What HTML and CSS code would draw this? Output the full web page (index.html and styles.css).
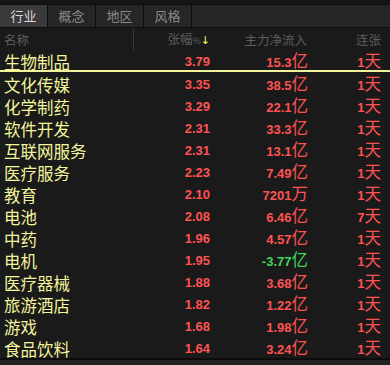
FILE: index.html
```html
<!DOCTYPE html>
<html>
<head>
<meta charset="utf-8">
<link rel="stylesheet" href="styles.css">
</head>
<body>
<div class="top"></div>
<div class="tabs">
  <div class="tab active">行业</div>
  <div class="tab">概念</div>
  <div class="tab">地区</div>
  <div class="tab">风格</div>
  <div class="tab-rest"></div>
</div>
<div class="head">
  <div class="h-name">名称</div>
  <div class="h-chg">张幅<span class="pct">%</span><span class="arrow">↓</span></div>
  <div class="h-flow">主力净流入</div>
  <div class="h-days">连张</div>
</div>
<div class="list">
  <div class="row first"><div class="name">生物制品</div><div class="chg">3.79</div><div class="flow">15.3<span class="u">亿</span></div><div class="days">1<span class="u">天</span></div></div>
  <div class="row"><div class="name">文化传媒</div><div class="chg">3.35</div><div class="flow">38.5<span class="u">亿</span></div><div class="days">1<span class="u">天</span></div></div>
  <div class="row"><div class="name">化学制药</div><div class="chg">3.29</div><div class="flow">22.1<span class="u">亿</span></div><div class="days">1<span class="u">天</span></div></div>
  <div class="row"><div class="name">软件开发</div><div class="chg">2.31</div><div class="flow">33.3<span class="u">亿</span></div><div class="days">1<span class="u">天</span></div></div>
  <div class="row"><div class="name">互联网服务</div><div class="chg">2.31</div><div class="flow">13.1<span class="u">亿</span></div><div class="days">1<span class="u">天</span></div></div>
  <div class="row"><div class="name">医疗服务</div><div class="chg">2.23</div><div class="flow">7.49<span class="u">亿</span></div><div class="days">1<span class="u">天</span></div></div>
  <div class="row"><div class="name">教育</div><div class="chg">2.10</div><div class="flow">7201<span class="u">万</span></div><div class="days">1<span class="u">天</span></div></div>
  <div class="row"><div class="name">电池</div><div class="chg">2.08</div><div class="flow">6.46<span class="u">亿</span></div><div class="days">7<span class="u">天</span></div></div>
  <div class="row"><div class="name">中药</div><div class="chg">1.96</div><div class="flow">4.57<span class="u">亿</span></div><div class="days">1<span class="u">天</span></div></div>
  <div class="row"><div class="name">电机</div><div class="chg">1.95</div><div class="flow down">-3.77<span class="u">亿</span></div><div class="days">1<span class="u">天</span></div></div>
  <div class="row"><div class="name">医疗器械</div><div class="chg">1.88</div><div class="flow">3.68<span class="u">亿</span></div><div class="days">1<span class="u">天</span></div></div>
  <div class="row"><div class="name">旅游酒店</div><div class="chg">1.82</div><div class="flow">1.22<span class="u">亿</span></div><div class="days">1<span class="u">天</span></div></div>
  <div class="row"><div class="name">游戏</div><div class="chg">1.68</div><div class="flow">1.98<span class="u">亿</span></div><div class="days">1<span class="u">天</span></div></div>
  <div class="row"><div class="name">食品饮料</div><div class="chg">1.64</div><div class="flow">3.24<span class="u">亿</span></div><div class="days">1<span class="u">天</span></div></div>
</div>
<div class="bottom"></div>
</body>
</html>
```
FILE: styles.css
```css
html, body {
  margin: 0;
  padding: 0;
  background: #1a1a1a;
  width: 390px;
  height: 365px;
  overflow: hidden;
  font-family: "Noto Sans CJK SC", "Liberation Sans", sans-serif;
}
.top {
  height: 4px;
  background: #151515;
  border-bottom: 1px solid #0e0e0e;
}
.tabs {
  display: flex;
  height: 22px;
  background: #262626;
  border-bottom: 1px solid #0e0e0e;
}
.tab {
  width: 47px;
  border-right: 1px solid #0e0e0e;
  color: #8a8a8a;
  font-size: 13px;
  line-height: 22px;
  text-align: center;
}
.tab.active {
  background: #3a3a3a;
  color: #d8d8d8;
}
.tab-rest {
  flex: 1;
}
.head {
  display: grid;
  grid-template-columns: 130px 76px 98px 73px;
  padding-left: 4px;
  height: 21px;
  align-items: center;
  color: #5e5e5e;
  font-size: 12.5px;
  line-height: 21px;
}
.h-name {
  border-right: 1px solid #3a3a3a;
  height: 21px;
}
.h-chg, .h-flow, .h-days {
  text-align: right;
}
.h-flow {
  padding-right: 1px;
}
.pct {
  font-size: 9px;
}
.arrow {
  color: #ffff66;
  font-family: "DejaVu Sans", sans-serif;
  font-size: 11px;
}
.list {
  border-bottom: 2px solid #0c0c0c;
}
.row {
  display: grid;
  grid-template-columns: 130px 76px 98px 73px;
  padding-left: 4px;
  height: 22px;
  align-items: center;
  line-height: 22px;
}
.row.first {
  height: 21px;
  border-bottom: 2px solid #f2f29a;
}
.name {
  color: #f4f49c;
  font-size: 16.5px;
  line-height: 22px;
  white-space: nowrap;
}
.chg, .flow, .days {
  text-align: right;
  color: #ff5353;
  font-family: "Liberation Sans", sans-serif;
  font-weight: bold;
  font-size: 13px;
}
.flow.down {
  color: #3dd65a;
}
.u {
  font-family: "Noto Sans CJK SC", sans-serif;
  font-weight: normal;
  font-size: 16.5px;
}
.bottom {
  height: 10px;
  background: #222;
}
```
